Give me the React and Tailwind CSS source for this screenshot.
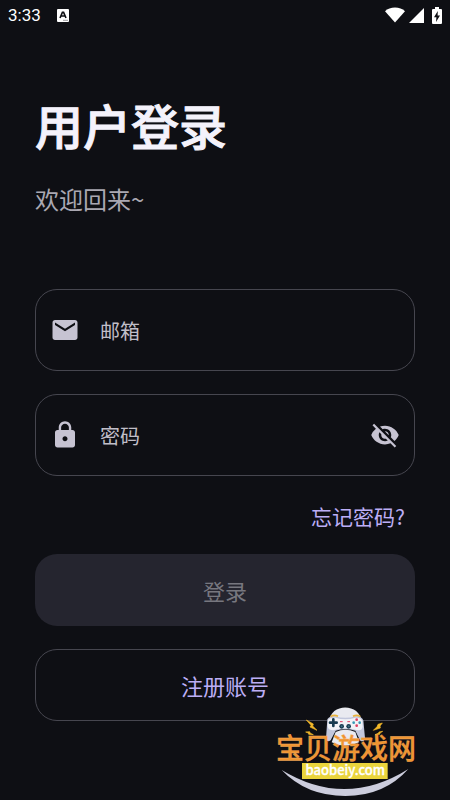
import React, { useState } from "react";
import { MdEmail, MdLock, MdVisibility, MdVisibilityOff } from "react-icons/md";

const StatusBar = () => (
  <div className="flex h-[30px] items-center justify-between px-2 text-white">
    <div className="flex items-center gap-4">
      <span className="font-[Roboto,sans-serif] text-[17px] leading-none">3:33</span>
      <svg width="12" height="13" viewBox="0 0 12 13" aria-hidden="true">
        <rect width="12" height="13" rx="1" fill="#fff" />
        <path d="M3 9 5.400 3.400h1.200L9 9M4 7h4" fill="none" stroke="#0e0f14" strokeWidth="1.6" />
        <path d="M6 11.300h5" stroke="#9a9a9e" strokeWidth="1" />
      </svg>
    </div>
    <div className="flex items-center gap-1">
      <svg width="20" height="16" viewBox="0 0 20 16" fill="#fff" aria-hidden="true">
        <path d="M0 4.200C2.600 1.800 6 .6 10 .6s7.400 1.200 10 3.600L10 15.400z" />
      </svg>
      <svg width="15" height="15" viewBox="0 0 15 15" fill="#fff" aria-hidden="true">
        <path d="M15 0v15H0z" />
      </svg>
      <svg className="ml-1" width="10" height="17" viewBox="0 0 10 17" aria-hidden="true">
        <path d="M3 0h4v2h2q1 0 1 1v13q0 1-1 1H1q-1 0-1-1V3q0-1 1-1h2z" fill="#fff" />
        <path d="M5.800 4 2 10.200h2.400L4 15l4-6.400H5.600z" fill="#0e0f14" />
      </svg>
    </div>
  </div>
);

const Field = ({ id, label, icon, children, ...props }) => (
  <div className="flex h-[82px] items-center rounded-[22px] border border-[#46464f] px-[14px]">
    <label htmlFor={id} aria-label={label} className="shrink-0 text-[#c6c3d2]">
      {icon}
    </label>
    <input
      id={id}
      placeholder={label}
      className="ml-5 h-full min-w-0 flex-1 bg-transparent text-[20px] text-[#e4e1ec] outline-none placeholder:text-[#c0bec8]"
      {...props}
    />
    {children}
  </div>
);

const SiteLogo = () => (
  <svg className="w-40" viewBox="0 0 480 315" role="img" aria-label="宝贝游戏网">
    <path d="M47 222Q238 338 427 219Q355 300 238 300T47 222z" fill="#cccddd" />
    {/* gamepad */}
    <path d="M189 78C192 20 283 20 287 78z" fill="#e9eaf0" />
    <path
      d="M184 70Q190 60 207 61Q238 70 269 61Q286 60 292 73L297 126Q294 140 283 134L268 104Q238 96 209 104L194 133Q183 140 180 128z"
      fill="#c2c7dc"
    />
    <path
      d="M186 72Q191 64 208 65Q238 75 268 65Q286 64 289 75L290 92Q288 105 272 102Q238 91 205 102Q187 105 185 91z"
      fill="#f2f3f7"
    />
    <path d="M209 108Q238 94 268 108L279 139Q238 160 197 139z" fill="#e9eaf0" />
    <path d="M194 62q10-7 22-1M261 61q12-6 22 1" fill="none" stroke="#e9b33b" strokeWidth="5" />
    <path d="M202 70v20M192 80h20" stroke="#183b50" strokeWidth="8" strokeLinecap="round" />
    <circle cx="227" cy="91" r="7" fill="#183b50" />
    <circle cx="248" cy="91" r="7" fill="#183b50" />
    <circle cx="227" cy="91" r="3" fill="#416e81" />
    <circle cx="248" cy="91" r="3" fill="#416e81" />
    <path d="M222 77h8M244 77h8" stroke="#df3e60" strokeWidth="3" />
    <circle cx="272" cy="71" r="4" fill="#df3e60" />
    <circle cx="272" cy="89" r="4" fill="#df3e60" />
    <circle cx="263" cy="80" r="4" fill="#3799b5" />
    <circle cx="281" cy="80" r="4" fill="#3799b5" />
    {/* sparks */}
    <g fill="#f3b829" stroke="#f3b829" strokeWidth="2">
      <path d="M121 72 142 84 140 90 153 103 132 93 135 88z" />
      <path d="M119 108 131 107 132 111 142 116 128 115 127 111z" />
      <path d="M349 81 336 85 333 92 322 103 343 96 342 90z" />
      <path d="M350 106 339 108 338 111 327 116 341 115 342 111z" />
    </g>
    <text
      x="240"
      y="190"
      textAnchor="middle"
      className="text-[84px] font-medium"
      fill="#ef9430"
      stroke="#f6ae62"
      strokeWidth="1"
    >
      宝贝游戏网
    </text>
    <rect x="108" y="201" width="257" height="48" fill="#ead43c" />
    <text
      x="238"
      y="238"
      textAnchor="middle"
      className="text-[39px] font-medium"
      fill="#fff"
      stroke="#fff"
      strokeWidth="1"
    >
      baobeiy.com
    </text>
  </svg>
);

const App = () => {
  const [email, setEmail] = useState("");
  const [password, setPassword] = useState("");
  const [visible, setVisible] = useState(false);

  return (
    <div className="relative min-h-screen bg-[#0e0f14] font-['Noto_Sans_CJK_SC',sans-serif]">
      <StatusBar />

      <main className="px-[35px] pt-[62px] pb-20">
        <h1 className="text-[48px] leading-[64px] font-medium text-[#f4f2fb] [-webkit-text-stroke:1px]">
          用户登录
        </h1>
        <p className="mt-[27px] text-[24px] leading-8 text-[#aaa8b2]">欢迎回来~</p>

        <form className="mt-[74px]" onSubmit={(e) => e.preventDefault()}>
          <div className="flex flex-col gap-[23px]">
            <Field
              id="email"
              type="email"
              label="邮箱"
              icon={<MdEmail size={30} />}
              value={email}
              onChange={(e) => setEmail(e.target.value)}
            />
            <Field
              id="password"
              type={visible ? "text" : "password"}
              label="密码"
              icon={<MdLock size={30} />}
              value={password}
              onChange={(e) => setPassword(e.target.value)}
            >
              <button
                type="button"
                aria-label="显示密码"
                onClick={() => setVisible(!visible)}
                className="shrink-0 text-[#c6c3d2]"
              >
                {visible ? <MdVisibility size={30} /> : <MdVisibilityOff size={30} />}
              </button>
            </Field>
          </div>

          <div className="mt-6 flex justify-end pr-[10px]">
            <a href="#forgot" className="text-[21px] leading-8 text-[#bcaef6]">
              忘记密码?
            </a>
          </div>

          <div className="mt-[22px] flex flex-col gap-[23px]">
            <button
              type="submit"
              disabled={!email || !password}
              className="h-[72px] rounded-[22px] bg-[#25252f] text-[22px] text-white disabled:text-[#77777f]"
            >
              登录
            </button>
            <button
              type="button"
              className="h-[72px] rounded-[22px] border border-[#46464f] text-[22px] text-[#bcaef6]"
            >
              注册账号
            </button>
          </div>
        </form>
      </main>

      <div className="pointer-events-none absolute right-6 bottom-0">
        <SiteLogo />
      </div>
    </div>
  );
};

export default App;
